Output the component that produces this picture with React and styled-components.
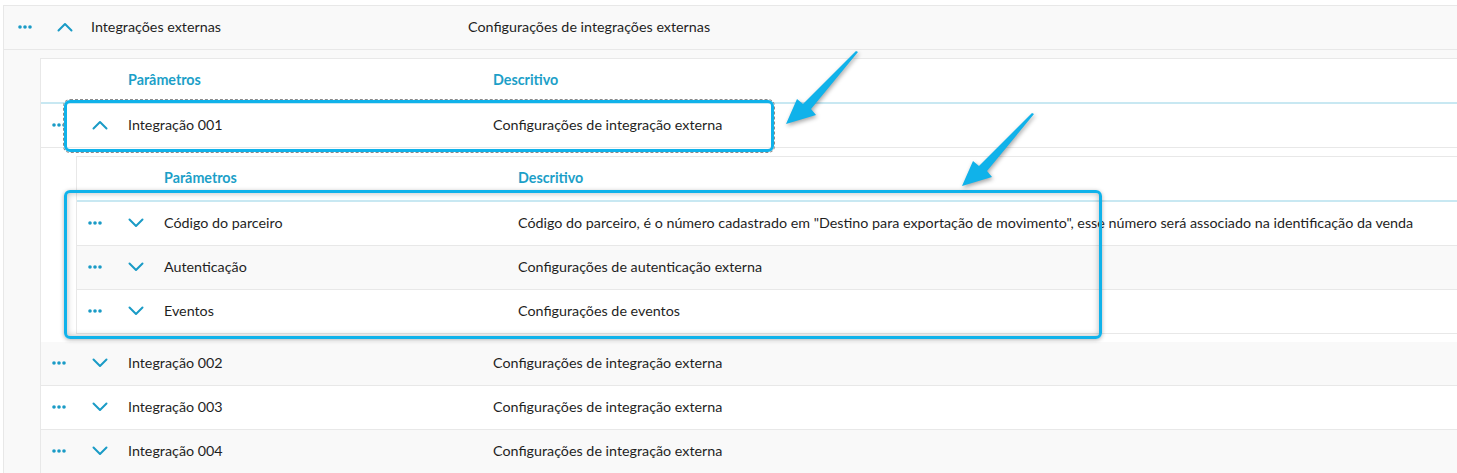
import React from "react";
import styled, { createGlobalStyle } from "styled-components";

const GlobalStyle = createGlobalStyle`
  html, body {
    margin: 0;
    padding: 0;
    background: #fff;
  }
  body {
    font-family: "Lato", "Open Sans", sans-serif;
    color: #1f1f1f;
  }
`;

const Page = styled.div`
  position: relative;
  width: 1457px;
  height: 473px;
  overflow: hidden;
  padding: 5px 0 0 3px;
  box-sizing: border-box;
`;

const Table = styled.div`
  display: flex;
  flex-direction: column;
  border-top: 1px solid #e8e8e8;
  border-left: 1px solid #e8e8e8;
  background: #fff;
  min-width: 100%;
  box-sizing: border-box;
`;

const Row = styled.div`
  display: grid;
  grid-template-columns: 87px ${(p) => p.$nameW}px 1fr;
  align-items: center;
  height: 44px;
  box-sizing: border-box;
  padding-bottom: 2px;
  border-bottom: 1px solid #e8e8e8;
  background: ${(p) => (p.$striped ? "#f9f9f9" : "#fff")};
  font-size: 14.3px;
  line-height: 18px;
  white-space: nowrap;
`;

const HeaderRow = styled(Row)`
  height: 45px;
  border-bottom: 2px solid #c8e8f2;
  font-weight: 700;
  color: #1c9fc8;
`;

const Actions = styled.div`
  display: flex;
  align-items: center;
  padding-left: ${(p) => p.$pad}px;
  gap: ${(p) => p.$gap}px;
`;

const Detail = styled.div`
  padding: 8px 0 ${(p) => p.$bottom}px ${(p) => p.$left}px;
  background: ${(p) => (p.$striped ? "#f9f9f9" : "#fff")};
`;

const Cell = styled.div`
  overflow: visible;
`;

const Overlay = styled.div`
  position: absolute;
  left: ${(p) => p.$x}px;
  top: ${(p) => p.$y}px;
  width: ${(p) => p.$w}px;
  height: ${(p) => p.$h}px;
  box-sizing: border-box;
  border: 3px solid #10b2ea;
  border-radius: 6px;
  pointer-events: none;
  box-shadow: ${(p) =>
    p.$shadow
      ? "inset 0 0 6px rgba(0,0,0,0.28), 0 1px 4px rgba(0,0,0,0.3)"
      : "none"};
  outline: ${(p) => (p.$dashed ? "1px dashed #8a8a8a" : "none")};
  outline-offset: 0px;
`;

const ArrowLayer = styled.svg`
  position: absolute;
  left: 0;
  top: 0;
  pointer-events: none;
  filter: drop-shadow(1px 2px 2px rgba(0, 0, 0, 0.35));
`;

function Dots() {
  return (
    <svg width="14" height="4" viewBox="0 0 14 4">
      <circle cx="2" cy="2" r="1.8" fill="#1a9bc6" />
      <circle cx="7" cy="2" r="1.8" fill="#1a9bc6" />
      <circle cx="12" cy="2" r="1.8" fill="#1a9bc6" />
    </svg>
  );
}

function Chevron({ up }) {
  return (
    <svg width="16" height="10" viewBox="0 0 16 10">
      <polyline
        points={up ? "1.5,8.5 8,2 14.5,8.5" : "1.5,1.5 8,8 14.5,1.5"}
        fill="none"
        stroke="#1a9bc6"
        strokeWidth="2"
        strokeLinecap="round"
        strokeLinejoin="round"
      />
    </svg>
  );
}

function DataRow({ name, desc, nameW, up, striped, pad = 11, gap = 26 }) {
  return (
    <Row $nameW={nameW} $striped={striped}>
      <Actions $pad={pad} $gap={gap}>
        <Dots />
        <Chevron up={up} />
      </Actions>
      <Cell>{name}</Cell>
      <Cell>{desc}</Cell>
    </Row>
  );
}

function Header({ nameW }) {
  return (
    <HeaderRow $nameW={nameW}>
      <span />
      <Cell>Parâmetros</Cell>
      <Cell>Descritivo</Cell>
    </HeaderRow>
  );
}

const params = [
  {
    name: "Código do parceiro",
    desc:
      'Código do parceiro, é o número cadastrado em "Destino para exportação de movimento", esse número será associado na identificação da venda',
  },
  { name: "Autenticação", desc: "Configurações de autenticação externa" },
  { name: "Eventos", desc: "Configurações de eventos" },
];

const arrowShape =
  "858,52 811,109 816,115 786,124 797,99 803,104 856,51";

export default function App() {
  return (
    <>
      <GlobalStyle />
      <Page>
        <Table>
          <DataRow
            name="Integrações externas"
            desc="Configurações de integrações externas"
            nameW={377}
            up
            striped
            pad={14}
            gap={25}
          />
          <Detail $left={36} $bottom={0} $striped>
            <Table>
              <Header nameW={365} />
              <DataRow
                name="Integração 001"
                desc="Configurações de integração externa"
                nameW={365}
                up
              />
              <Detail $left={35} $bottom={8}>
                <Table>
                  <Header nameW={354} />
                  {params.map((p, i) => (
                    <DataRow
                      key={p.name}
                      name={p.name}
                      desc={p.desc}
                      nameW={354}
                      striped={i % 2 === 1}
                    />
                  ))}
                </Table>
              </Detail>
              {["002", "003", "004"].map((n, i) => (
                <DataRow
                  key={n}
                  name={`Integração ${n}`}
                  desc="Configurações de integração externa"
                  nameW={365}
                  striped={i % 2 === 0}
                />
              ))}
            </Table>
          </Detail>
        </Table>

        <Overlay $x={64} $y={100} $w={710} $h={52} $dashed />
        <Overlay $x={64} $y={190} $w={1038} $h={149} $shadow />

        <ArrowLayer width="1457" height="473" viewBox="0 0 1457 473">
          <polygon points={arrowShape} fill="#10b2ea" />
          <polygon
            points={arrowShape}
            fill="#10b2ea"
            transform="translate(176 62)"
          />
        </ArrowLayer>
      </Page>
    </>
  );
}
